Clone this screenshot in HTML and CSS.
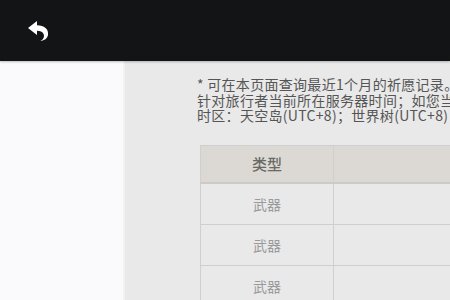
FILE: index.html
```html
<!DOCTYPE html>
<html lang="zh">
<head>
<meta charset="utf-8">
<link rel="stylesheet" href="styles.css">
</head>
<body>
<header class="topbar">
  <button class="back" aria-label="返回">
    <svg width="24" height="22" viewBox="0 0 24 22">
      <path d="M1 8 L10 1 L10 5.2 C17 5.2 22 9 21 15 C20.4 18.5 17.5 20.5 13.5 21 C16.8 19 17.6 16.5 16.6 14 C15.6 11.7 13 10.8 10 10.8 L10 15 Z" fill="#fff"/>
    </svg>
  </button>
</header>
<div class="main">
  <aside class="side"></aside>
  <section class="content">
    <div class="notes">
      <p>* 可在本页面查询最近1个月的祈愿记录。</p>
      <p>针对旅行者当前所在服务器时间；如您当前</p>
      <p>时区：天空岛(UTC+8)；世界树(UTC+8)；</p>
    </div>
    <table class="records">
      <thead>
        <tr><th class="c1">类型</th><th class="c2"></th></tr>
      </thead>
      <tbody>
        <tr><td class="c1">武器</td><td class="c2"></td></tr>
        <tr><td class="c1">武器</td><td class="c2"></td></tr>
        <tr><td class="c1">武器</td><td class="c2"></td></tr>
      </tbody>
    </table>
  </section>
</div>
</body>
</html>
```
FILE: styles.css
```css
html, body {
  margin: 0;
  padding: 0;
  height: 100%;
  overflow: hidden;
  background: #e9e9e9;
  font-family: "Noto Sans CJK SC", Roboto, "Noto Sans", sans-serif;
}
.topbar {
  height: 61px;
  background: #131416;
  display: flex;
  align-items: center;
  box-shadow: 0 1px 2px rgba(0,0,0,0.25);
  position: relative;
  z-index: 2;
}
.back {
  background: none;
  border: 0;
  padding: 0;
  margin-left: 27px;
  margin-top: 1px;
  width: 24px;
  height: 22px;
  display: flex;
}
.main {
  display: flex;
  height: calc(100% - 61px);
}
.side {
  width: 123px;
  flex: none;
  background: #fafafc;
  border-right: 2px solid #f2f2f3;
}
.content {
  flex: 1;
  background: #e9e9e9;
  padding: 16px 0 0 72px;
  overflow: hidden;
}
.notes {
  color: #555555;
  font-size: 14px;
  letter-spacing: 0.3px;
  line-height: 15.5px;
  white-space: nowrap;
}
.notes p {
  margin: 0;
}
.records {
  margin-top: 21px;
  margin-left: 3px;
  border-collapse: collapse;
  width: 400px;
  table-layout: fixed;
}
.records th, .records td {
  border: 1px solid #cfcfcf;
  text-align: center;
  padding: 0;
}
.records th {
  height: 36px;
  background: #dcd9d4;
  color: #6a6965;
  font-size: 15px;
  font-weight: 500;
  border-bottom: 2px solid #cdcbc6;
}
.records td {
  height: 40px;
  color: #9a9a9a;
  font-size: 14px;
}
.records .c1 { width: 132px; }
```
